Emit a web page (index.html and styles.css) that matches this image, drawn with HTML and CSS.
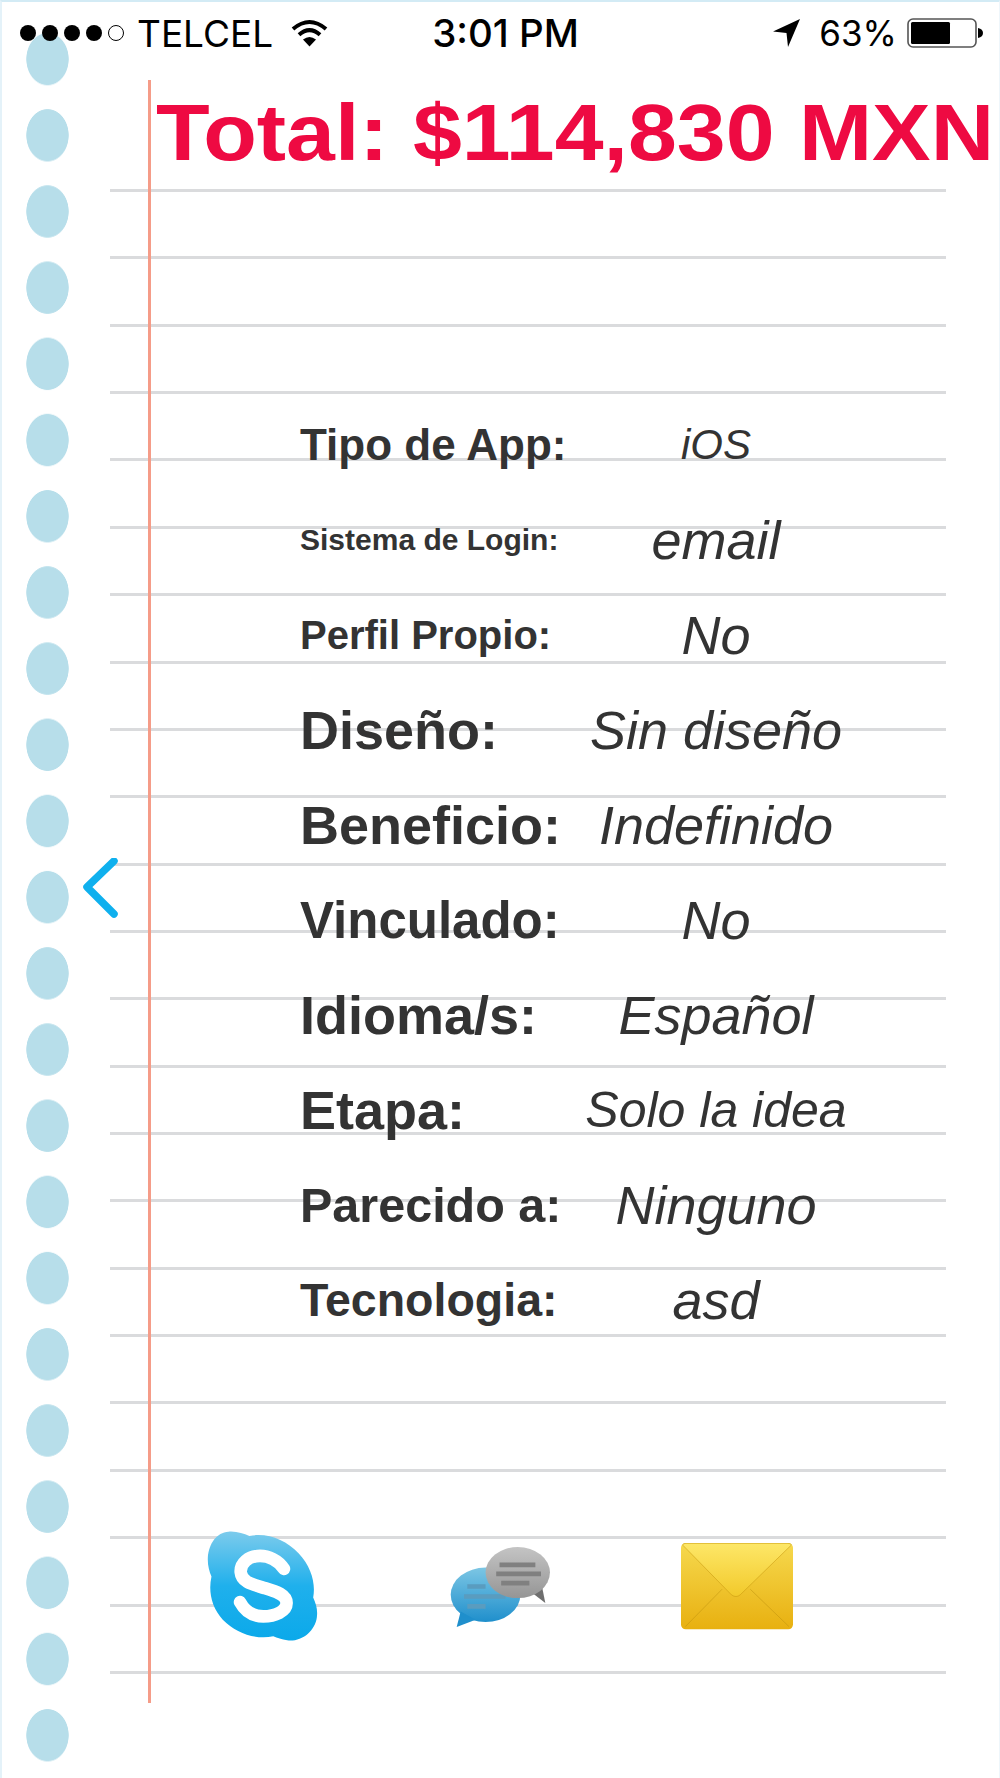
FILE: index.html
```html
<!DOCTYPE html>
<html lang="es">
<head>
  <meta charset="UTF-8" />
  <meta name="viewport" content="width=device-width, initial-scale=1.0" />
  <title>Total</title>
  <link rel="stylesheet" href="styles.css">
</head>
<body>

  <div class="pagina">
    <div class="agujeros"></div>
    <div class="renglones">
      <i></i><i></i><i></i><i></i><i></i><i></i><i></i><i></i>
      <i></i><i></i><i></i><i></i><i></i><i></i><i></i><i></i>
      <i></i><i></i><i></i><i></i><i></i><i></i><i></i>
    </div>
    <div class="margen"></div>

    <header class="status">
      <div class="status-izq">
        <span class="senal"><i></i><i></i><i></i><i></i><i class="vacio"></i></span>
        <span class="operador">TELCEL</span>
        <svg class="wifi" viewBox="0 0 37 28">
          <path d="M2 10Q18.5-4 35 10M8 15.8Q18.5 6.5 29 15.8" fill="none" stroke="#000" stroke-width="4"/>
          <path d="M12 20.5Q18.5 15.5 25 20.5L18.5 27.5Z"/>
        </svg>
      </div>
      <div class="hora">3:01 PM</div>
      <div class="status-der">
        <svg class="flecha" viewBox="0 0 27 28"><path d="M0 12.5L27 0 15 28 13.5 14Z"/></svg>
        <span class="bateria-txt">63%</span>
        <svg class="bateria" viewBox="0 0 76 30">
          <rect x="1" y="1" width="68" height="28" rx="5" fill="none" stroke="#555" stroke-width="1.6"/>
          <rect x="4" y="4" width="39" height="22" rx="1.5"/>
          <path d="M71 10Q76 11 76 15T71 20Z"/>
        </svg>
      </div>
    </header>

    <h1 class="total">Total: $114,830 MXN</h1>

    <a class="volver" href="#">
      <svg viewBox="0 0 36 60"><path d="M32 3L5 29 32 56" fill="none" stroke="#0fb0ee" stroke-width="7.5" stroke-linecap="round" stroke-linejoin="round"/></svg>
    </a>

    <section class="resumen">
      <div class="fila"><span class="dato t44">Tipo de App:</span><span class="valor t42">iOS</span></div>
      <div class="fila"><span class="dato t30">Sistema de Login:</span><span class="valor">email</span></div>
      <div class="fila"><span class="dato t40">Perfil Propio:</span><span class="valor">No</span></div>
      <div class="fila"><span class="dato">Diseño:</span><span class="valor">Sin diseño</span></div>
      <div class="fila"><span class="dato">Beneficio:</span><span class="valor">Indefinido</span></div>
      <div class="fila"><span class="dato t51">Vinculado:</span><span class="valor">No</span></div>
      <div class="fila"><span class="dato">Idioma/s:</span><span class="valor">Español</span></div>
      <div class="fila"><span class="dato">Etapa:</span><span class="valor t50">Solo la idea</span></div>
      <div class="fila"><span class="dato t48">Parecido a:</span><span class="valor">Ninguno</span></div>
      <div class="fila"><span class="dato t46">Tecnologia:</span><span class="valor">asd</span></div>
    </section>

    <nav class="contacto">
      <svg class="ic-skype" viewBox="75 55 345 340">
        <defs>
          <linearGradient id="azulSkype" x1="0" y1="0" x2="0" y2="1">
            <stop offset="0" stop-color="#7ccbec"/>
            <stop offset="0.5" stop-color="#1fb0ec"/>
            <stop offset="1" stop-color="#0ba9ea"/>
          </linearGradient>
        </defs>
        <path fill="url(#azulSkype)" d="M145 60C170 58 190 66 208 73 262 62 318 85 356 125 394 165 408 215 400 258 409 278 414 295 411 318 405 360 365 392 322 387 305 385 292 380 280 375 225 386 168 365 128 325 94 288 84 240 94 195 87 178 82 160 83 138 86 95 110 62 145 60Z"/>
        <path d="M312 172C295 145 265 133 240 133 205 133 180 155 182 182 185 215 225 220 255 230 290 240 320 250 320 275 320 300 285 315 250 315 220 315 195 300 180 272" fill="none" stroke="#fff" stroke-width="38" stroke-linecap="round"/>
      </svg>

      <svg class="ic-chat" viewBox="55 100 310 250">
        <defs>
          <linearGradient id="azulChat" x1="0" y1="0" x2="0" y2="1">
            <stop offset="0" stop-color="#7cc6e4"/>
            <stop offset="1" stop-color="#1f8fcc"/>
          </linearGradient>
          <linearGradient id="grisChat" x1="0" y1="0" x2="0" y2="1">
            <stop offset="0" stop-color="#c4c4c4"/>
            <stop offset="1" stop-color="#959595"/>
          </linearGradient>
        </defs>
        <ellipse cx="165" cy="250" rx="105" ry="82" fill="url(#azulChat)"/>
        <path d="M90 300L78 347 135 325Z" fill="#1f8fcc"/>
        <path d="M110 225h55M100 255h125M110 285h55" stroke="#5a9cbf" stroke-width="14" fill="none"/>
        <path d="M300 240L345 275 335 225Z" fill="#6e6e6e"/>
        <ellipse cx="262" cy="183" rx="97" ry="77" fill="url(#grisChat)"/>
        <path d="M207 160h108M197 187h135M212 215h85" stroke="#808080" stroke-width="14" fill="none"/>
      </svg>

      <svg class="ic-sobre" viewBox="755 100 335 260">
        <defs>
          <linearGradient id="oroSobre" x1="0" y1="0" x2="0" y2="1">
            <stop offset="0" stop-color="#f6d94e"/>
            <stop offset="1" stop-color="#e8b010"/>
          </linearGradient>
          <linearGradient id="oroSolapa" x1="0" y1="0" x2="0" y2="1">
            <stop offset="0" stop-color="#fde768"/>
            <stop offset="1" stop-color="#f2c92a"/>
          </linearGradient>
        </defs>
        <rect x="755" y="100" width="335" height="258" rx="14" fill="url(#oroSobre)"/>
        <path d="M768 350L878 238M1078 350L962 238" stroke="#b98c0c" stroke-width="2.5" opacity="0.55" fill="none"/>
        <path d="M760 106Q760 101 770 101H1075Q1085 101 1085 106L932 255Q920 265 906 255Z" fill="url(#oroSolapa)" stroke="#c7980f" stroke-width="2" stroke-opacity="0.8"/>
      </svg>
    </nav>
  </div>

</body>
</html>
```

FILE: styles.css
```css
* {
  box-sizing: border-box;
}

body {
  margin: 0;
  background: white;
  font-family: "Liberation Sans", Arial, sans-serif;
}

.pagina {
  position: relative;
  z-index: 0;
  width: 1000px;
  height: 1778px;
  overflow: hidden;
  border-top: 2px solid #d3ebf5;
  border-left: 2px solid #e4f2f9;
  border-right: 1px solid #eef6fb;
}

/* fondo de libreta */
.agujeros {
  position: absolute;
  z-index: -1;
  left: 24px;
  top: 19px;
  width: 43px;
  height: 1753px;
  background: radial-gradient(ellipse 21.5px 26.5px at center, #b7deea 97%, transparent 100%) 0 0 / 43px 76.2px repeat-y;
}

.renglones {
  position: absolute;
  z-index: -1;
  left: 108px;
  top: 187px;
  width: 836px;
  height: 1485px;
  display: flex;
  flex-direction: column;
  justify-content: space-between;
}

.renglones i {
  display: block;
  height: 3px;
  background: #dadbdd;
}

.margen {
  position: absolute;
  z-index: -1;
  left: 146px;
  top: 78px;
  width: 3px;
  height: 1623px;
  background: #f59c88;
}

/* barra de estado */
.status {
  display: grid;
  grid-template-columns: 1fr auto 1fr;
  align-items: center;
  height: 62px;
  padding: 0 16px 0 18px;
  font-family: Inter, "Liberation Sans", sans-serif;
  font-size: 36px;
  color: #000;
}

.status-izq {
  display: flex;
  align-items: center;
}

.status-der {
  display: flex;
  align-items: center;
  justify-content: flex-end;
}

.senal {
  display: flex;
  align-items: center;
  gap: 6px;
  margin-right: 13px;
}

.senal i {
  width: 16px;
  height: 16px;
  border-radius: 50%;
  background: #000;
}

.senal i.vacio {
  background: none;
  border: 1.5px solid #000;
}

.operador {
  margin-right: 18px;
  font-size: 37px;
}

.wifi {
  width: 37px;
  height: 28px;
}

.hora {
  margin-left: 8px;
  font-size: 38.5px;
  font-weight: 500;
}

.flecha {
  width: 27px;
  height: 28px;
  margin-right: 19px;
}

.bateria-txt {
  margin-right: 10px;
  font-size: 35px;
}

.bateria {
  width: 76px;
  height: 30px;
}

/* total */
.total {
  height: 138px;
  margin: 0 0 0 154px;
  font-size: 80px;
  line-height: 138px;
  font-weight: bold;
  color: #ee0a42;
  white-space: nowrap;
  transform: scaleX(1.098);
  transform-origin: left center;
}

.volver {
  position: absolute;
  left: 80px;
  top: 856px;
  width: 36px;
  height: 60px;
}

.volver svg {
  display: block;
  width: 36px;
  height: 60px;
}

/* filas del resumen */
.resumen {
  margin: 195.5px 0 0 298px;
  width: 564px;
}

.fila {
  display: grid;
  grid-template-columns: 270px 1fr;
  align-items: center;
  height: 95px;
  color: #333;
}

.dato {
  font-size: 54px;
  font-weight: bold;
  white-space: nowrap;
}

.valor {
  font-size: 54px;
  font-style: italic;
  text-align: center;
  white-space: nowrap;
  padding-right: 2px;
}

.t30 { font-size: 30px; }
.t40 { font-size: 40px; }
.t42 { font-size: 42px; }
.t44 { font-size: 44px; }
.t46 { font-size: 46.5px; }
.t48 { font-size: 48.5px; }
.t50 { font-size: 50px; }
.t51 { font-size: 51px; }

/* iconos de contacto */
.contacto {
  display: flex;
  align-items: center;
  gap: 129px;
  height: 115px;
  margin: 181px 0 0 203px;
}

.ic-skype {
  width: 115px;
  height: 113px;
}

.ic-chat {
  width: 103px;
  height: 83px;
}

.ic-sobre {
  width: 112px;
  height: 87px;
}
```
